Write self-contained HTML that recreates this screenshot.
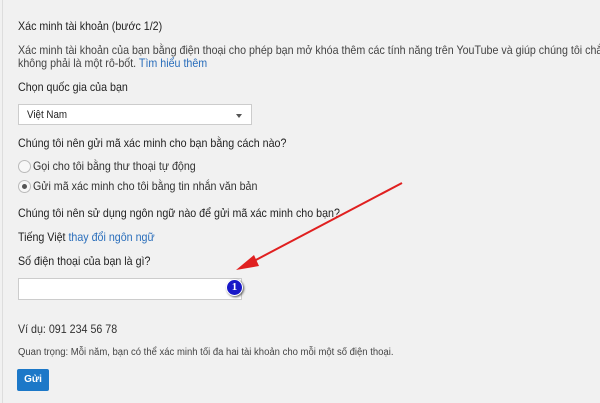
<!DOCTYPE html>
<html><head><meta charset="utf-8"><style>
body{margin:0;width:600px;height:403px;background:#f1f1f1;font-family:"Liberation Sans",Arial,sans-serif;color:#222;position:relative;overflow:hidden}
.t{position:absolute;left:18px;font-size:12px;white-space:nowrap;line-height:14px;transform:scaleX(0.89);transform-origin:0 0}
a{color:#2a6ebb;text-decoration:none}
.r{position:absolute;left:18px;width:11px;height:11px;border:1px solid #bbb;border-radius:50%;background:#f7f7f7}
</style></head><body>
<div style="position:absolute;left:2px;top:0;width:1px;height:403px;background:#ddd"></div>
<div class="t" style="top:19px">Xác minh tài khoản (bước 1/2)</div>
<div class="t" style="top:43px;color:#444">Xác minh tài khoản của bạn bằng điện thoại cho phép bạn mở khóa thêm các tính năng trên YouTube và giúp chúng tôi chắc</div>
<div class="t" style="top:56px;color:#444">không phải là một rô-bốt. <a>Tìm hiểu thêm</a></div>
<div class="t" style="top:80px">Chọn quốc gia của bạn</div>
<div style="position:absolute;left:18px;top:104px;width:234px;height:21px;background:#fff;border:1px solid #ccc;box-sizing:border-box"></div>
<div class="t" style="top:108px;left:27px;font-size:11px">Việt Nam</div>
<div style="position:absolute;left:236px;top:114px;border-left:3.5px solid transparent;border-right:3.5px solid transparent;border-top:4px solid #555"></div>
<div class="t" style="top:136px">Chúng tôi nên gửi mã xác minh cho bạn bằng cách nào?</div>
<div class="r" style="top:160px"></div>
<div class="t" style="top:159px;left:33px;color:#333">Gọi cho tôi bằng thư thoại tự động</div>
<div class="r" style="top:180px"></div>
<div style="position:absolute;left:22px;top:184px;width:5px;height:5px;border-radius:50%;background:#555"></div>
<div class="t" style="top:179px;left:33px;color:#333">Gửi mã xác minh cho tôi bằng tin nhắn văn bản</div>
<div class="t" style="top:206px">Chúng tôi nên sử dụng ngôn ngữ nào để gửi mã xác minh cho bạn?</div>
<div class="t" style="top:230px">Tiếng Việt <a>thay đổi ngôn ngữ</a></div>
<div class="t" style="top:254px">Số điện thoại của bạn là gì?</div>
<div style="position:absolute;left:18px;top:278px;width:224px;height:22px;background:#fff;border:1px solid #ccc;box-sizing:border-box"></div>
<div style="position:absolute;left:226px;top:279px;width:15px;height:15px;border-radius:50%;background:#1818c8;border:1.5px solid #fff;box-shadow:1px 1px 2px #555;color:#fff;font:bold 11px/15px 'Liberation Serif',serif;text-align:center">1</div>
<div class="t" style="top:322px;color:#333">Ví dụ: 091 234 56 78</div>
<div class="t" style="top:346px;font-size:10px;color:#444;transform:scaleX(0.95)">Quan trọng: Mỗi năm, bạn có thể xác minh tối đa hai tài khoản cho mỗi một số điện thoại.</div>
<div style="position:absolute;left:17px;top:369px;width:32px;height:22px;background:#1c78c8;border-radius:2px;color:#fff;font:bold 10px/22px 'Liberation Sans',sans-serif;text-align:center">Gửi</div>
<svg style="position:absolute;left:0;top:0" width="600" height="403"><line x1="402" y1="183" x2="252" y2="262" stroke="#e02020" stroke-width="2"/><polygon points="236,270 254,255 259,266" fill="#e02020"/></svg>
</body></html>
